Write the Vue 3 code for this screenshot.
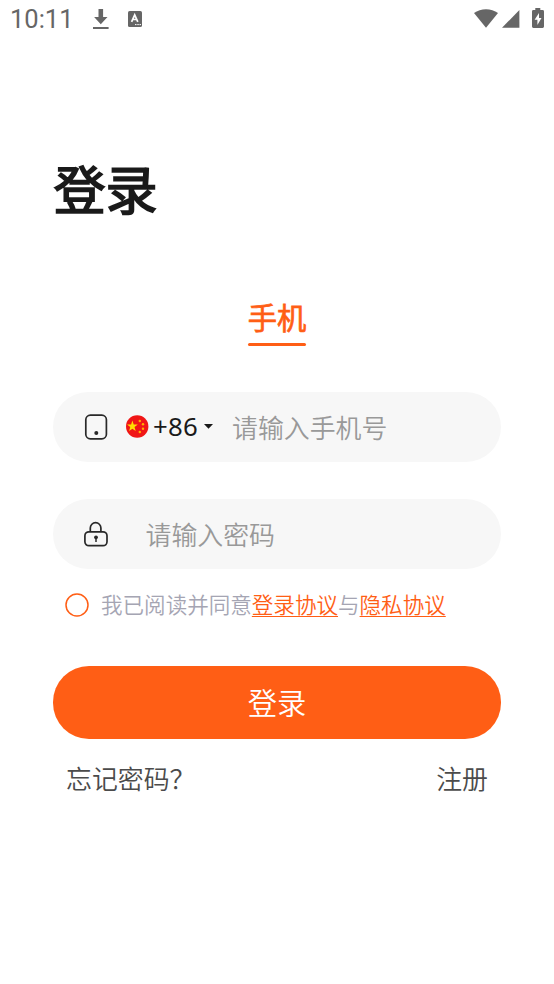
<script setup>
import { ref } from 'vue'

const phone = ref('')
const password = ref('')
const agreed = ref(false)
</script>

<template>
  <div class="screen">
    <header class="status">
      <span class="time">10:11</span>
      <svg class="download" width="16" height="21" viewBox="0 0 16 21">
        <path d="M5.5 0h4.6v8h4.4L7.8 15.2 1.1 8h4.4zM0 18h15.6v2H0z" fill="#666" />
      </svg>
      <svg class="app" width="14" height="16" viewBox="0 0 14 16">
        <rect width="14" height="16" rx="1.6" fill="#666" />
        <path d="M3.6 10.8 6.7 3.8 9.8 10.8M4.8 8.5h3.8" fill="none" stroke="#fff" stroke-width="1.7" />
        <path d="M7 13.6h1.5M9.3 13.6h1.5M11.5 13.6H13" stroke="#fff" stroke-width="1" />
      </svg>
      <span class="grow"></span>
      <svg class="wifi" width="24" height="19" viewBox="0 0 24 19">
        <path d="M0 4.1C6.7-1.2 17.3-1.2 24 4.1L12 18.7z" fill="#666" />
      </svg>
      <svg class="signal" width="18" height="18" viewBox="0 0 18 18">
        <path d="M17.4 0v17.8H0z" fill="#666" />
      </svg>
      <svg class="battery" width="12" height="20" viewBox="0 0 12 20">
        <path d="M3.3 0h5v2h2.2Q12 2 12 3.4v15.2Q12 20 10.6 20H1.4Q0 20 0 18.6V3.4Q0 2 1.4 2h1.9z" fill="#666" />
        <path d="M7 5 2.6 11.7h2.8v5.4L9.5 10H7z" fill="#fff" />
      </svg>
    </header>

    <main class="content">
      <h1 class="title">登录</h1>
      <nav class="tabs"><a class="tab">手机</a></nav>

      <label class="field">
        <svg class="lead" width="24" height="26" viewBox="0 0 24 26">
          <rect x="1.8" y="1.2" width="20.6" height="23.6" rx="4.6" fill="none" stroke="#292929" stroke-width="1.7" />
          <circle cx="12.3" cy="19" r="2" fill="#292929" />
        </svg>
        <svg class="flag" width="23" height="23" viewBox="0 0 23 23">
          <circle cx="11.2" cy="11.5" r="11.2" fill="#f01616" />
          <path d="m6.4 5.6 1.3 3.9 4.1.1-3.3 2.5 1.2 3.9-3.3-2.3L3.1 16l1.2-3.9L1 9.6l4.1-.1z" fill="#ffe000" />
          <g fill="#ffb000">
            <circle cx="13.8" cy="6" r="1.2" />
            <circle cx="17" cy="9.2" r="1.2" />
            <circle cx="17" cy="13.8" r="1.2" />
            <circle cx="13.8" cy="17" r="1.2" />
          </g>
        </svg>
        <span class="code">+86</span>
        <svg class="caret" width="9" height="5" viewBox="0 0 9 5">
          <path d="M0 0h9L4.5 4.7z" fill="#1a1a1a" />
        </svg>
        <input v-model="phone" type="tel" placeholder="请输入手机号" />
      </label>

      <label class="field password">
        <svg class="lead" width="24" height="26" viewBox="0 0 24 26">
          <path d="M6.3 11V7a5.3 5.3 0 0 1 10.6 0v4" fill="none" stroke="#292929" stroke-width="1.7" />
          <rect x=".9" y="10.8" width="22.1" height="13.9" rx="4" fill="none" stroke="#292929" stroke-width="1.7" />
          <circle cx="12" cy="16.3" r="1.9" fill="#292929" />
          <path d="M12 16v5" stroke="#292929" stroke-width="1.5" />
        </svg>
        <input v-model="password" type="password" placeholder="请输入密码" />
      </label>

      <div class="agree">
        <svg class="radio" width="24" height="24" viewBox="0 0 24 24" @click="agreed = !agreed">
          <circle cx="12" cy="12" r="11" fill="none" stroke="#ff5e15" stroke-width="1.5" />
          <circle v-if="agreed" cx="12" cy="12" r="6" fill="#ff5e15" />
        </svg>
        <span>我已阅读并同意<a class="link">登录协议</a>与<a class="link">隐私协议</a></span>
      </div>

      <button class="submit">登录</button>
      <div class="links"><a>忘记密码？</a><a>注册</a></div>
    </main>
  </div>
</template>

<style>
body {
  background: #fff;
}
</style>

<style scoped>
.screen {
  width: 554px;
  height: 984px;
  box-sizing: border-box;
  overflow: hidden;
  background: #fff;
  font-family: "Noto Sans CJK SC", sans-serif;
  font-weight: 350;
}
.status {
  display: flex;
  align-items: center;
  height: 38px;
  padding: 0 10px 0 10px;
}
.time {
  width: 83px;
  font: 400 25.5px/38px Roboto, sans-serif;
  color: #666;
}
.download {
  margin-right: 19px;
}
.grow {
  flex: 1;
}
.wifi {
  margin-bottom: 2px;
}
.signal {
  margin: 0 12px 0 4px;
}
.battery {
  margin-bottom: 2px;
}
.content {
  padding: 111px 53px 0;
}
.title {
  margin: 0;
  height: 78px;
  padding-left: 0.5px;
  font-size: 52px;
  line-height: 78px;
  font-weight: 400;
  -webkit-text-stroke: 1.7px #1a1a1a;
  color: #1a1a1a;
}
.tabs {
  display: flex;
  justify-content: center;
  margin-top: 68px;
  height: 50px;
}
.tab {
  box-sizing: border-box;
  height: 50px;
  font-size: 29.3px;
  line-height: 42px;
  font-weight: 400;
  -webkit-text-stroke: 0.7px #ff5e15;
  color: #ff5e15;
  display: flex;
  flex-direction: column;
}
.tab::after {
  content: "";
  flex: none;
  height: 3px;
  margin-top: 6px;
  border-radius: 2px;
  background: #ff5e15;
}
.field {
  display: flex;
  align-items: center;
  box-sizing: border-box;
  height: 70.5px;
  margin-top: 46.5px;
  padding: 0 30px 0 31px;
  border-radius: 36px;
  background: #f7f7f7;
}
.password {
  margin-top: 36.5px;
}
.lead {
  flex: none;
  margin-right: 17.5px;
}
.flag {
  flex: none;
  margin-right: 4.5px;
}
.code {
  width: 51px;
  font-family: "Noto Sans", sans-serif;
  font-weight: 400;
  font-size: 25.8px;
  line-height: 36px;
  letter-spacing: 0.2px;
  padding-bottom: 1px;
  color: #1a1a1a;
}
.caret {
  flex: none;
  margin-right: 19px;
}
input {
  flex: 1;
  min-width: 0;
  height: 44px;
  padding: 0;
  border: 0;
  outline: 0;
  background: transparent;
  font-family: inherit;
  font-weight: inherit;
  font-size: 25.9px;
  color: #1a1a1a;
}
input::placeholder {
  color: #999;
  opacity: 1;
}
.password input {
  margin-left: 20px;
}
.agree {
  display: flex;
  align-items: center;
  height: 36px;
  margin-top: 17.5px;
  padding-left: 12px;
  font-size: 21.55px;
  line-height: 32px;
  color: #a5a5b3;
  white-space: nowrap;
}
.agree > span {
  padding-bottom: 1px;
}
.radio {
  margin-right: 12px;
}
.link {
  color: #ff5e15;
  text-decoration: underline;
  text-decoration-thickness: 1px;
  text-underline-offset: 3px;
}
.submit {
  display: block;
  width: 448px;
  height: 73px;
  margin-top: 43px;
  padding: 0 0 2px;
  border: 0;
  border-radius: 36px;
  background: #ff5e15;
  color: #fff;
  font-family: inherit;
  font-weight: inherit;
  font-size: 29.3px;
}
.links {
  display: flex;
  justify-content: space-between;
  margin-top: 19px;
  padding: 0 13px;
  font-size: 25.9px;
  line-height: 40px;
  color: #4b4b4b;
}
</style>
